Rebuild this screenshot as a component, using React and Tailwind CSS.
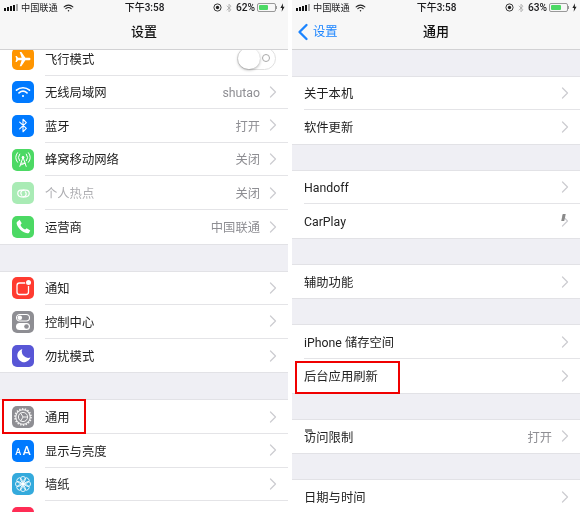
import { ChevronRight, ChevronLeft } from 'lucide-react';

const cjk = { fontFamily: 'Roboto, "Noto Sans CJK SC", sans-serif' };

const Wifi = ({ className = '', color = '#fff' }) => (
  <svg viewBox="0 0 16 12" className={className} fill="none" stroke={color} strokeWidth="1.7" strokeLinecap="round">
    <path d="M1.5 4.2C5.2 .9 10.8 .9 14.5 4.2" />
    <path d="M4 6.9c2.4-2 5.6-2 8 0" />
    <circle cx="8" cy="10" r="1.1" fill={color} stroke="none" />
  </svg>
);

const Bluetooth = ({ className = '', color = '#fff' }) => (
  <svg viewBox="0 0 12 18" className={className} fill="none" stroke={color} strokeWidth="1.3" strokeLinejoin="round" strokeLinecap="round">
    <path d="M2 5l8 7.5L6 16.5V1.5l4 4L2 13" />
  </svg>
);

const Tile = ({ color, children }) => (
  <div className={`w-[22px] h-[22px] rounded-[5px] flex items-center justify-center shrink-0 overflow-hidden ${color}`}>
    {children}
  </div>
);

const icons = {
  plane: (
    <Tile color="bg-[#ff9500]">
      <svg viewBox="0 0 24 24" className="w-[18px] h-[18px]" fill="#fff">
        <path d="M22 12c0-1-1-1.700-2.300-1.700h-4.500L9.800 2.500H7.600l2.600 7.800H5.500L3.600 8H2l1 4-1 4h1.600l1.900-2.300h4.700l-2.600 7.800h2.200l5.400-7.800h4.500C21 13.700 22 13 22 12z" />
      </svg>
    </Tile>
  ),
  wifi: (
    <Tile color="bg-[#007aff]">
      <Wifi className="w-[16px] h-[12px]" />
    </Tile>
  ),
  bluetooth: (
    <Tile color="bg-[#007aff]">
      <Bluetooth className="w-[10px] h-[15px]" />
    </Tile>
  ),
  cellular: (
    <Tile color="bg-[#4cd964]">
      <svg viewBox="0 0 22 22" className="w-[20px] h-[20px]" fill="none" stroke="#fff" strokeWidth="1.1" strokeLinecap="round">
        <path d="M7.300 4.500a6 6 0 0 0 0 7.500M14.700 4.500a6 6 0 0 1 0 7.500M5 3a8.500 8.500 0 0 0 0 10.500M17 3a8.500 8.500 0 0 1 0 10.500" />
        <path d="M11 8l-3.500 10M11 8l3.500 10M9 14.500h4M8.500 16.500l5-2" />
        <circle cx="11" cy="8" r="1.400" fill="#fff" stroke="none" />
      </svg>
    </Tile>
  ),
  hotspot: (
    <Tile color="bg-[#a9ebb5]">
      <svg viewBox="0 0 22 22" className="w-[21px] h-[21px]" fill="none" stroke="#fff" strokeWidth="1.300">
        <path d="M12 7.500H8.500a3.500 3.500 0 0 0 0 7H11a3 3 0 0 0 1.500-5.500" />
        <path d="M10 14.500h3.500a3.500 3.500 0 0 0 0-7H11a3 3 0 0 0-1.500 5.500" />
      </svg>
    </Tile>
  ),
  phone: (
    <Tile color="bg-[#4cd964]">
      <svg viewBox="0 0 24 24" className="w-[17px] h-[17px]" fill="#fff">
        <path d="M6.500 2.500l3 5-1.800 2.300c1.200 2.700 3.700 5.300 6.500 6.500l2.300-1.800 5 3-1.700 3.300c-.5.700-1.500 1-2.500.8C10 20.300 3.700 14 2.300 7.700c-.2-1 .1-2 .8-2.500z" />
      </svg>
    </Tile>
  ),
  notify: (
    <Tile color="bg-[#ff3b30]">
      <svg viewBox="0 0 22 22" className="w-[22px] h-[22px]" fill="none">
        <rect x="5" y="6" width="11.500" height="11.500" rx="2.500" stroke="#fff" strokeWidth="1.300" />
        <circle cx="16.500" cy="5.500" r="3.400" fill="#ff3b30" />
        <circle cx="16.500" cy="5.500" r="2.500" fill="#fff" />
      </svg>
    </Tile>
  ),
  control: (
    <Tile color="bg-[#8e8e93]">
      <svg viewBox="0 0 22 22" className="w-[22px] h-[22px]">
        <rect x="4.500" y="3.500" width="13" height="6.500" rx="3.250" fill="none" stroke="#fff" strokeWidth="1.100" />
        <circle cx="7.800" cy="6.750" r="2.300" fill="#fff" />
        <rect x="4" y="12" width="14" height="7" rx="3.500" fill="#fff" />
        <circle cx="14.500" cy="15.500" r="2.300" fill="#8e8e93" />
      </svg>
    </Tile>
  ),
  moon: (
    <Tile color="bg-[#5856d6]">
      <svg viewBox="0 0 22 22" className="w-[17px] h-[17px]" fill="#fff">
        <path d="M9.500 2.500A8.700 8.700 0 1 0 20 13.500 8.300 8.300 0 0 1 9.500 2.500z" />
      </svg>
    </Tile>
  ),
  gear: (
    <Tile color="bg-[#8e8e93]">
      <svg viewBox="0 0 22 22" className="w-[22px] h-[22px]" fill="none" stroke="#f2f2f2">
        <circle cx="11" cy="11" r="7.200" strokeWidth="1.100" />
        <circle cx="11" cy="11" r="8" strokeWidth="1.800" strokeDasharray="1.400 1.400" />
        <circle cx="11" cy="11" r="4.600" strokeWidth="1" />
        <path d="M11 11L8.500 6.800M11 11l4.700 0M11 11l-2.400 4.200" strokeWidth="1" />
      </svg>
    </Tile>
  ),
  display: (
    <Tile color="bg-[#007aff]">
      <span className="text-white font-medium leading-none flex items-baseline gap-[1.5px]">
        <span className="text-[9px]">A</span>
        <span className="text-[12px]">A</span>
      </span>
    </Tile>
  ),
  wallpaper: (
    <Tile color="bg-[#34aadc]">
      <svg viewBox="0 0 22 22" className="w-[20px] h-[20px]" fill="none" stroke="#fff" strokeWidth="0.900">
        <circle cx="11" cy="11" r="2.300" fill="#fff" stroke="none" />
        {[0, 45, 90, 135, 180, 225, 270, 315].map((a) => (
          <circle key={a} cx="11" cy="5.500" r="2.800" transform={`rotate(${a} 11 11)`} />
        ))}
      </svg>
    </Tile>
  ),
  sound: <Tile color="bg-[#ff2d55]" />,
};

const StatusBar = ({ battery, fill }) => (
  <div className="h-[16px] grid grid-cols-[1fr_auto_1fr] items-center text-[#1c1c1e] pl-1 pr-[3px]">
    <div className="flex items-center text-[9.200px] leading-none">
      <div className="flex items-end gap-[1px] mr-[3px]">
        <span className="w-[2px] h-[3px] bg-[#111]" />
        <span className="w-[2px] h-[4px] bg-[#111]" />
        <span className="w-[2px] h-[5px] bg-[#111]" />
        <span className="w-[2px] h-[6px] bg-[#111]" />
        <span className="w-[2px] h-[7px] bg-[#aaa]" />
      </div>
      <span>中国联通</span>
      <Wifi color="#222" className="w-[11px] h-[8px] ml-[5px]" />
    </div>
    <div className="text-[10px] font-medium leading-none">下午3:58</div>
    <div className="flex items-center justify-end text-[10.200px] leading-none font-medium">
      <svg viewBox="0 0 12 12" className="w-[9px] h-[9px] mr-[4px]" fill="none" stroke="#222" strokeWidth="1.200">
        <circle cx="6" cy="6" r="4.800" />
        <circle cx="6" cy="6" r="2.200" fill="#222" stroke="none" />
      </svg>
      <Bluetooth color="#999" className="w-[6px] h-[10px] mr-[4px]" />
      <span className="mr-[2px]">{battery}%</span>
      <div className="w-[19px] h-[9px] rounded-[2px] border border-[#999] p-[1px] flex">
        <div className={`bg-[#4cd964] rounded-[1px] h-full ${fill}`} />
      </div>
      <span className="w-[1px] h-[3px] bg-[#999] mr-[3px]" />
      <svg viewBox="0 0 6 10" className="w-[5px] h-[9px]" fill="#222">
        <path d="M3.600 0L0.500 5.600h2L2 10l3.500-6H3.400z" />
      </svg>
    </div>
  </div>
);

const Row = ({ icon, label, value, dim, toggle, last }) => (
  <div className="h-[33.600px] flex items-center pl-3">
    {icon && <div className="mr-[11px]">{icon}</div>}
    <div className={`flex-1 h-full flex items-center pr-3 ${last ? '' : 'border-b border-[#e4e4e7]'}`}>
      <span className={`flex-1 pt-[3px] text-[12.300px] ${dim ? 'text-[#aeaeb2]' : 'text-[#222]'}`}>{label}</span>
      {toggle ? (
        <div className="w-[39px] h-[23px] rounded-full border border-[#e0e0e0] relative flex items-center justify-end pr-[5px]">
          <span className="w-[8px] h-[8px] rounded-full border border-[#aaa]" />
          <span className="absolute left-0 top-0 w-[22px] h-[21px] bg-white rounded-full shadow-[0_1px_3px_rgba(0,0,0,0.35)]" />
        </div>
      ) : (
        <>
          {value && <span className="pt-[3px] text-[12.300px] text-[#8e8e93] mr-[10px]">{value}</span>}
          <ChevronRight className="w-[20px] h-[20px] -mx-[7px] text-[#cdcdd1]" strokeWidth={1.500} />
        </>
      )}
    </div>
  </div>
);

const Group = ({ rows, className = '' }) => (
  <div className={`bg-white shadow-[0_0_0_1px_#e2e2e6] ${className}`}>
    {rows.map((r, i) => (
      <Row key={i} {...r} last={i === rows.length - 1} />
    ))}
  </div>
);

const App = () => (
  <div className="relative w-[580px] h-[512px] overflow-hidden bg-white flex justify-between blur-[0.35px]" style={cjk}>
    <div className="w-[288px] h-full flex flex-col bg-[#efeff4]">
      <div className="h-[50px] shrink-0 bg-[#f7f7f7] border-b border-[#d2d2d4] relative z-10">
        <StatusBar battery={62} fill="w-[9px]" />
        <div className="h-[32px] flex items-center justify-center text-[13px] font-medium text-[#111]">设置</div>
      </div>
      <div className="flex-1 overflow-hidden">
        <div className="-mt-[8px]">
          <Group rows={[
            { icon: icons.plane, label: '飞行模式', toggle: true },
            { icon: icons.wifi, label: '无线局域网', value: 'shutao' },
            { icon: icons.bluetooth, label: '蓝牙', value: '打开' },
            { icon: icons.cellular, label: '蜂窝移动网络', value: '关闭' },
            { icon: icons.hotspot, label: '个人热点', value: '关闭', dim: true },
            { icon: icons.phone, label: '运营商', value: '中国联通' },
          ]} />
          <Group className="mt-[28px]" rows={[
            { icon: icons.notify, label: '通知' },
            { icon: icons.control, label: '控制中心' },
            { icon: icons.moon, label: '勿扰模式' },
          ]} />
          <Group className="mt-[28px]" rows={[
            { icon: icons.gear, label: '通用' },
            { icon: icons.display, label: '显示与亮度' },
            { icon: icons.wallpaper, label: '墙纸' },
            { icon: icons.sound },
          ]} />
        </div>
      </div>
    </div>

    <div className="w-[288px] h-full flex flex-col bg-[#efeff4]">
      <div className="h-[50px] shrink-0 bg-[#f7f7f7] border-b border-[#d2d2d4] relative z-10">
        <StatusBar battery={63} fill="w-[10px]" />
        <div className="h-[32px] grid grid-cols-[1fr_auto_1fr] items-center">
          <div className="flex items-center text-[#1a84ff] text-[12.300px]">
            <ChevronLeft className="w-[28px] h-[28px] -ml-[3px] -mr-[4px]" strokeWidth={2} />
            <span>设置</span>
          </div>
          <div className="text-[13px] font-medium text-[#111]">通用</div>
        </div>
      </div>
      <div className="flex-1 overflow-hidden">
        <Group className="mt-[26.500px]" rows={[{ label: '关于本机' }, { label: '软件更新' }]} />
        <Group className="mt-[27px]" rows={[{ label: 'Handoff' }, { label: 'CarPlay' }]} />
        <Group className="mt-[27px]" rows={[{ label: '辅助功能' }]} />
        <Group className="mt-[27px]" rows={[{ label: 'iPhone 储存空间' }, { label: '后台应用刷新' }]} />
        <Group className="mt-[27px]" rows={[{ label: '访问限制', value: '打开' }]} />
        <Group className="mt-[27px]" rows={[{ label: '日期与时间' }]} />
      </div>
    </div>

    {/* red annotation boxes */}
    <div className="absolute left-[2px] top-[399px] w-[84px] h-[35px] border-2 border-[#f00000]" />
    <div className="absolute left-[295px] top-[361px] w-[105px] h-[33px] border-2 border-[#f00000]" />
    {/* retouch smudges left in the screenshot */}
    <div className="absolute left-[562px] top-[214px] w-[3px] h-[7px] bg-[#8a8a8a] -skew-x-12" />
    <div className="absolute left-[305px] top-[429px] w-[7px] h-[3px] bg-[#8a8a8a]" />
  </div>
);

export default App;
